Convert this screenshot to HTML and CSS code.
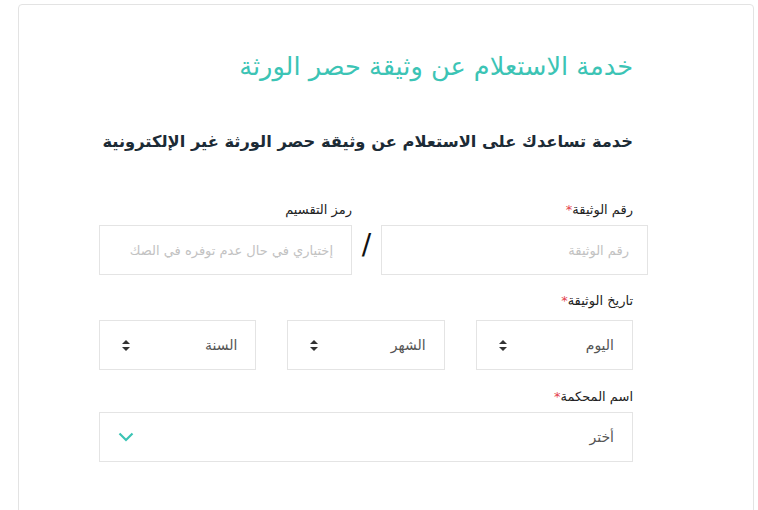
FILE: index.html
```html
<!DOCTYPE html>
<html lang="ar" dir="rtl">
<head>
    <meta charset="UTF-8">
    <meta name="viewport" content="width=device-width, initial-scale=1.0">
    <title>الاستعلام عن وثيقة حصر الورثة</title>
    <link rel="stylesheet" href="styles.css">
</head>
<body>

<div class="card">
    <h1 class="title">خدمة الاستعلام عن وثيقة حصر الورثة</h1>
    <h2 class="subtitle">خدمة تساعدك على الاستعلام عن وثيقة حصر الورثة غير الإلكترونية</h2>

    <div class="row-doc">
        <div class="field field-number">
            <label class="label">رقم الوثيقة<span class="req">*</span></label>
            <div class="box placeholder">رقم الوثيقة</div>
        </div>
        <div class="slash">/</div>
        <div class="field field-code">
            <label class="label">رمز التقسيم</label>
            <div class="box placeholder">إختياري في حال عدم توفره في الصك</div>
        </div>
    </div>

    <label class="label">تاريخ الوثيقة<span class="req">*</span></label>
    <div class="row-date">
        <div class="box select">
            <span>اليوم</span>
            <svg class="updown" width="8" height="11" viewBox="0 0 8 11"><path d="M4 0 L8 4 L0 4 Z M0 7 L8 7 L4 11 Z" fill="#333"/></svg>
        </div>
        <div class="box select">
            <span>الشهر</span>
            <svg class="updown" width="8" height="11" viewBox="0 0 8 11"><path d="M4 0 L8 4 L0 4 Z M0 7 L8 7 L4 11 Z" fill="#333"/></svg>
        </div>
        <div class="box select">
            <span>السنة</span>
            <svg class="updown" width="8" height="11" viewBox="0 0 8 11"><path d="M4 0 L8 4 L0 4 Z M0 7 L8 7 L4 11 Z" fill="#333"/></svg>
        </div>
    </div>

    <label class="label">اسم المحكمة<span class="req">*</span></label>
    <div class="box select court">
        <span>أختر</span>
        <svg width="16" height="10" viewBox="0 0 16 10"><path d="M1.5 1.5 L8 8 L14.5 1.5" fill="none" stroke="#3cc4b5" stroke-width="2.2"/></svg>
    </div>
</div>

</body>
</html>
```

FILE: styles.css
```css
html, body {
    overflow: hidden;
}
body {
    margin: 0;
    background-color: #fff;
    font-family: "DejaVu Sans", sans-serif;
    color: #222;
}
.card {
    margin: 4px 4px 0 18px;
    padding: 34px 120px 60px 80px;
    border: 1px solid #e3e3e3;
    border-radius: 4px;
    height: 600px;
}
.title {
    margin: 0;
    font-size: 25.6px;
    font-weight: normal;
    color: #3cc4b5;
    line-height: 54px;
}
.subtitle {
    margin: 37px 0 47px;
    font-size: 16.3px;
    font-weight: bold;
    color: #1c2b36;
    line-height: 24px;
    white-space: nowrap;
}
.label {
    display: block;
    font-size: 13px;
    line-height: 18px;
    margin-bottom: 6px;
}
.req {
    color: #e4424d;
}
.box {
    box-sizing: border-box;
    height: 50px;
    border: 1px solid #e4e4e4;
    display: flex;
    align-items: center;
    padding: 0 18px;
    font-size: 14px;
}
.placeholder {
    color: #c2c2c2;
    font-size: 13px;
}
.row-doc {
    display: flex;
    margin-right: -15px;
    margin-bottom: 17px;
}
.field-number {
    width: 267px;
}
.field-number .label {
    padding-right: 15px;
}
.field-code {
    flex: 1;
}
.slash {
    width: 29px;
    padding-top: 19px;
    text-align: center;
    font-size: 28px;
    line-height: 50px;
    color: #111;
}
.row-date {
    display: flex;
    gap: 31px;
    margin: 10px 0 18px;
}
.row-date .box {
    flex: 1;
}
.select {
    justify-content: space-between;
    color: #555;
}
.updown {
    margin-left: 4px;
}
.court {
    padding-left: 18px;
}
```
